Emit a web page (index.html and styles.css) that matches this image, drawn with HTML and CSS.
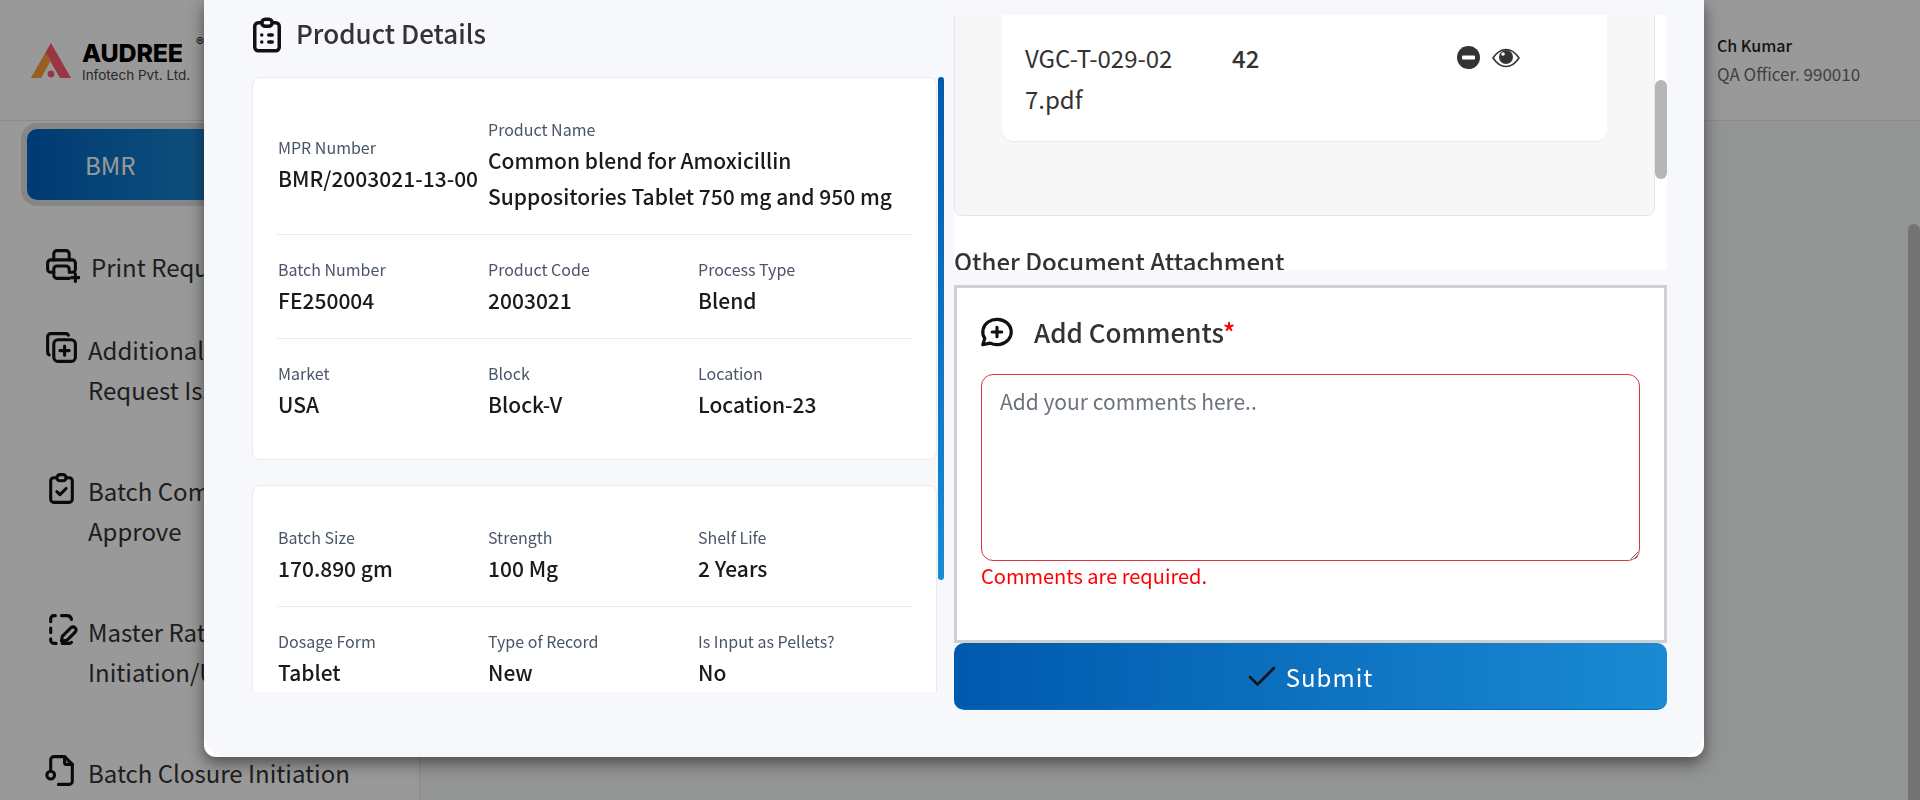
FILE: index.html
```html
<!DOCTYPE html>
<html lang="en">
<head>
<meta charset="utf-8">
<title>BMR</title>
<link rel="stylesheet" href="styles.css">
</head>
<body>
<div class="page">
  <header class="topbar">
    <div class="logo">
      <svg class="logo-mark" viewBox="0 0 40 35"><polygon points="20,0 0,35 10,35 23,9" fill="#ff9a33"/><polygon points="20,0 40,35 29,35 14.500,10" fill="#ff5a70" /><polygon points="20,0 0,35 10,35 20,17 14.500,10" fill="#ff9f3a"/><circle cx="20" cy="31" r="3.400" fill="#ff5a70"/></svg>
      <div class="logo-text">
        <div class="logo-name">AUDREE<span class="logo-reg">®</span></div>
        <div class="logo-sub">Infotech Pvt. Ltd.</div>
      </div>
    </div>
    <div class="user">
      <div class="user-name">Ch Kumar</div>
      <div class="user-role">QA Officer. 990010</div>
    </div>
  </header>
  <div class="below">
    <aside class="sidebar">
      <div class="side-btn">BMR</div>
      <div class="side-item side-print">
        <svg class="ic" viewBox="0 0 24 24"><path d="M17 17h2a2 2 0 0 0 2 -2v-4a2 2 0 0 0 -2 -2h-14a2 2 0 0 0 -2 2v4a2 2 0 0 0 2 2h2"/><path d="M17 9v-4a2 2 0 0 0 -2 -2h-6a2 2 0 0 0 -2 2v4"/><path d="M17 21h-8a2 2 0 0 1 -2 -2v-4a2 2 0 0 1 2 -2h6a2 2 0 0 1 2 2v1"/><path d="M21 18v5M18.500 20.500h5"/></svg>
        <span>Print Request</span>
      </div>
      <div class="side-item">
        <svg class="ic" viewBox="0 0 24 24"><path d="M7 9.667a2.667 2.667 0 0 1 2.667 -2.667h8.666a2.667 2.667 0 0 1 2.667 2.667v8.666a2.667 2.667 0 0 1 -2.667 2.667h-8.666a2.667 2.667 0 0 1 -2.667 -2.667z"/><path d="M4.012 16.737a2 2 0 0 1 -1.012 -1.737v-10c0 -1.100 .9 -2 2 -2h10c.75 0 1.158 .385 1.500 1"/><path d="M11 14h6M14 11v6"/></svg>
        <span>Additional Batch Record Request Issue</span>
      </div>
      <div class="side-item">
        <svg class="ic" viewBox="0 0 24 24"><path d="M9 5h-2a2 2 0 0 0 -2 2v12a2 2 0 0 0 2 2h10a2 2 0 0 0 2 -2v-12a2 2 0 0 0 -2 -2h-2"/><path d="M9 5a2 2 0 0 1 2 -2h2a2 2 0 0 1 2 2a2 2 0 0 1 -2 2h-2a2 2 0 0 1 -2 -2z"/><path d="M9 14l2 2l4 -4"/></svg>
        <span>Batch Compliance Review Approve</span>
      </div>
      <div class="side-item">
        <svg class="ic" viewBox="0 0 24 24"><path d="M8 3h-1a2 2 0 0 0 -2 2v2M12 3h2l1.500 0a3 3 0 0 1 3 2.500M5 11v3M5 18v1a2 2 0 0 0 2 2h1.500M12.500 21h4.500a2 2 0 0 0 1.500 -.7"/><path d="M12.500 16.500l5.500 -5.500a1.900 1.900 0 0 1 3 2.500l-5.500 5.500l-3.500 .5z"/></svg>
        <span>Master Rate Change Initiation/Update</span>
      </div>
      <div class="side-item">
        <svg class="ic" viewBox="0 0 24 24"><path d="M14 3v4a1 1 0 0 0 1 1h4"/><path d="M5 11v-6a2 2 0 0 1 2 -2h7l5 5v11a2 2 0 0 1 -2 2h-7"/><circle cx="5" cy="15" r="2.500"/></svg>
        <span>Batch Closure Initiation</span>
      </div>
    </aside>
    <main class="content"></main>
  </div>
  <div class="page-thumb"></div>
</div>

<div class="backdrop"></div>

<section class="modal">
  <div class="modal-body">
    <div class="col-left">
      <h2 class="section-title">
        <svg class="ic ic-title" viewBox="0 0 24 24"><path d="M9 5h-2a2 2 0 0 0 -2 2v12a2 2 0 0 0 2 2h10a2 2 0 0 0 2 -2v-12a2 2 0 0 0 -2 -2h-2"/><path d="M9 5a2 2 0 0 1 2 -2h2a2 2 0 0 1 2 2a2 2 0 0 1 -2 2h-2a2 2 0 0 1 -2 -2z"/><path d="M9 12h.01M13 12h2M9 16h.01M13 16h2"/></svg>
        <span>Product Details</span>
      </h2>
      <div class="left-scroll">
        <div class="card">
          <div class="info-row info-center">
            <div class="field"><div class="lbl">MPR Number</div><div class="val">BMR/2003021-13-00</div></div>
            <div class="field field-wide"><div class="lbl">Product Name</div><div class="val">Common blend for Amoxicillin Suppositories Tablet 750 mg and 950 mg</div></div>
          </div>
          <div class="info-row">
            <div class="field"><div class="lbl">Batch Number</div><div class="val">FE250004</div></div>
            <div class="field"><div class="lbl">Product Code</div><div class="val">2003021</div></div>
            <div class="field"><div class="lbl">Process Type</div><div class="val">Blend</div></div>
          </div>
          <div class="info-row">
            <div class="field"><div class="lbl">Market</div><div class="val">USA</div></div>
            <div class="field"><div class="lbl">Block</div><div class="val">Block-V</div></div>
            <div class="field"><div class="lbl">Location</div><div class="val">Location-23</div></div>
          </div>
        </div>
        <div class="card">
          <div class="info-row">
            <div class="field"><div class="lbl">Batch Size</div><div class="val">170.890 gm</div></div>
            <div class="field"><div class="lbl">Strength</div><div class="val">100 Mg</div></div>
            <div class="field"><div class="lbl">Shelf Life</div><div class="val">2 Years</div></div>
          </div>
          <div class="info-row">
            <div class="field"><div class="lbl">Dosage Form</div><div class="val">Tablet</div></div>
            <div class="field"><div class="lbl">Type of Record</div><div class="val">New</div></div>
            <div class="field"><div class="lbl">Is Input as Pellets?</div><div class="val">No</div></div>
          </div>
        </div>
        <div class="left-thumb"></div>
      </div>
    </div>

    <div class="col-right">
      <div class="right-scroll">
        <div class="file-panel">
          <div class="file-card">
            <div class="file-name">VGC-T-029-027.pdf</div>
            <div class="file-count">42</div>
            <div class="file-actions">
              <svg class="ic-minus" viewBox="0 0 23 23"><circle cx="11.500" cy="11.500" r="11.500" fill="#333"/><rect x="5" y="9.500" width="13" height="4" rx="1" fill="#fff"/></svg>
              <svg class="ic-eye" viewBox="0 0 28 20"><path d="M1 10C5 4 9 1.500 14 1.500S23 4 27 10C23 16 19 18.500 14 18.500S5 16 1 10Z" fill="none" stroke="#333" stroke-width="1.600"/><circle cx="14" cy="9" r="7" fill="#333"/><circle cx="11" cy="6" r="1.800" fill="#fff"/></svg>
            </div>
          </div>
        </div>
        <h3 class="other-title">Other Document Attachment</h3>
        <div class="right-thumb"></div>
      </div>
      <div class="comment-box">
        <div class="comment-head">
          <svg class="ic ic-msg" viewBox="0 0 24 24"><path d="M3 20l1.300 -3.900c-2.324 -3.437 -1.426 -7.872 2.100 -10.374c3.526 -2.501 8.590 -2.296 11.845 .48c3.255 2.777 3.695 7.266 1.029 10.501c-2.666 3.235 -7.615 4.215 -11.574 2.293l-4.700 1"/><path d="M9 12h6M12 9v6"/></svg>
          <span class="comment-title">Add Comments<span class="req">*</span></span>
        </div>
        <textarea class="comment-input" placeholder="Add your comments here.."></textarea>
        <div class="comment-error">Comments are required.</div>
      </div>
      <button class="submit" type="button">
        <svg class="ic-check" viewBox="0 0 28 21"><path d="M2 11l7.500 7.500L26 2"/></svg>
        <span>Submit</span>
      </button>
    </div>
  </div>
</section>
</body>
</html>
```
FILE: styles.css
```css
* { box-sizing: border-box; }
html, body { margin: 0; padding: 0; height: 100%; overflow: hidden; }
body { font-family: "Noto Sans CJK SC", "Noto Sans", sans-serif; color: #212529; background: #fff; }

.page { height: 800px; display: flex; flex-direction: column; background: #fff; }
.topbar { height: 121px; flex: none; display: flex; justify-content: space-between; background: #fff; border-bottom: 1px solid #e8e8e8; padding: 43px 0 0 31px; }
.logo { display: flex; gap: 11px; align-items: flex-start; }
.logo-mark { width: 40px; height: 35px; }
.logo-text { width: 125px; }
.logo-name { font-family: Inter, sans-serif; font-weight: 800; font-size: 25px; line-height: 20px; color: #000; position: relative; letter-spacing: -.2px; }
.logo-reg { position: absolute; left: 114px; top: -8px; font-size: 12px; font-weight: 400; line-height: 14px; }
.logo-sub { font-family: Inter, sans-serif; font-size: 13.500px; line-height: 16px; margin-top: 4px; color: #444; white-space: nowrap; }
.user { width: 203px; margin-top: -10px; }
.user-name { font-size: 16px; font-weight: 500; line-height: 24px; color: #212529; }
.user-role { font-size: 17px; line-height: 24px; margin-top: 5px; color: #6c6c6c; }

.below { flex: 1; display: flex; min-height: 0; }
.sidebar { width: 420px; flex: none; border-right: 1px solid #e4e4e4; padding: 8px 0 0 27px; overflow: hidden; }
.side-btn { width: 200px; height: 71px; margin-bottom: 47px; padding-left: 58px; border-radius: 10px; display: flex; align-items: center; background: linear-gradient(90deg, #0063c0, #1a8ad3); box-shadow: 0 0 0 6px #e0e0e0; color: #fff; font-size: 24px; }
.side-item { display: flex; align-items: flex-start; gap: 8px; margin-left: 16px; margin-bottom: 60px; width: 360px; font-size: 24px; line-height: 40px; color: #333; height: 81px; }
.side-item span { flex: 1; }
.side-print { height: 40px; margin-bottom: 43px; gap: 11px; }
.ic { fill: none; stroke: #111; stroke-width: 2; stroke-linecap: round; stroke-linejoin: round; width: 37px; height: 37px; flex: none; margin-top: -1px; }
.content { flex: 1; background: #f5f8f7; }
.page-thumb { position: absolute; right: 0; top: 224px; width: 12px; height: 576px; border-radius: 6px 6px 0 0; background: #bfc0bf; }

.backdrop { position: fixed; inset: 0; background: rgba(0, 0, 0, .4); }

.modal { position: absolute; left: 204px; top: 0; width: 1500px; height: 757px; background: #fff; border-radius: 0 0 12px 12px; box-shadow: 0 6px 16px rgba(0, 0, 0, .5); }
.modal-body { height: 100%; display: flex; gap: 10px; padding: 15px 37px 0 48px; background: #f7f8fb; border-radius: 0 0 24px 24px; }

.col-left { width: 692px; flex: none; display: flex; flex-direction: column; }
.section-title { margin: 0; height: 62px; flex: none; display: flex; align-items: flex-start; gap: 6px; font-size: 26px; font-weight: 500; line-height: 36px; color: #333; }
.ic-title { width: 42px; height: 42px; margin-left: -6px; }
.section-title span { margin-left: 2px; }
.left-scroll { position: relative; height: 615px; overflow: hidden; }
.card { width: 685px; background: #fff; border: 1px solid #e8ebef; border-radius: 8px; padding: 17px 24px; margin-bottom: 25px; }
.info-row { display: grid; grid-template-columns: 210px 210px 210px; padding: 23px 0 20px 1px; border-bottom: 1px solid #e9ebef; width: 636px; }
.card .info-row:last-child { border-bottom: 0; }
.info-center { align-items: center; }
.field-wide { grid-column: span 2; }
.lbl { font-size: 16px; line-height: 22px; color: #4a5568; margin-bottom: 2px; }
.val { font-size: 21px; font-weight: 500; line-height: 36px; color: #1a1a1a; }
.left-thumb { position: absolute; left: 686px; top: 0; width: 6px; height: 503px; border-radius: 3px; background: linear-gradient(180deg, #0059ad, #1a8ad3); }

.col-right { width: 713px; flex: none; display: flex; flex-direction: column; }
.right-scroll { position: relative; height: 255px; background: #fff; overflow: hidden; display: flex; flex-direction: column; justify-content: flex-end; flex: none; }
.file-panel { flex: none; width: 701px; background: #f7f7f8; border: 1px solid #e4e6ea; border-radius: 8px; padding: 0 47px 73px; margin-bottom: 27px; }
.file-card { background: #fff; border-bottom: 1px solid #e8eaee; border-radius: 0 0 12px 12px; height: 300px; padding: 0 0 22px 23px; display: grid; grid-template-columns: 207px 225px auto; align-content: end; }
.file-name { width: 150px; font-size: 24px; line-height: 41px; color: #333; word-break: break-all; }
.file-count { font-size: 24px; line-height: 41px; font-weight: 500; color: #333; }
.file-actions { display: flex; gap: 12px; align-items: flex-start; padding-top: 9px; }
.ic-minus { width: 23px; height: 23px; }
.ic-eye { width: 28px; height: 20px; margin-top: 2px; }
.other-title { flex: none; margin: 0; height: 27px; font-size: 24px; font-weight: 500; line-height: 36px; color: #333; overflow: visible; }
.right-thumb { position: absolute; right: 0; top: 65px; width: 12px; height: 99px; border-radius: 6px; background: #b5b7b6; }

.comment-box { margin-top: 15px; height: 358px; border: 3px solid #d0d0d0; background: #fff; padding: 28px 21px 0 24px; flex: none; }
.comment-head { display: flex; gap: 18px; align-items: center; height: 32px; margin-bottom: 26px; }
.ic-msg { width: 38px; height: 38px; margin: 0 -3px; }
.comment-title { font-size: 26px; font-weight: 500; color: #333; line-height: 32px; margin-left: 3px; }
.req { color: #f00; }
.comment-input { display: block; width: 659px; height: 187px; border: 1px solid #dc3545; border-radius: 12px; padding: 8px 18px; font: 21px/36px "Noto Sans CJK SC", "Noto Sans", sans-serif; outline: 0; resize: vertical; }
.comment-input::placeholder { color: #6c757d; opacity: 1; }
.comment-error { color: #f00; font-size: 20px; line-height: 30px; }
.submit { flex: none; height: 67px; border: 0; border-bottom: 1px solid #0b6cb5; border-radius: 10px; background: linear-gradient(90deg, #0059ad, #1a8ad3); display: flex; justify-content: center; align-items: center; gap: 10px; color: #fff; font: 24px "Noto Sans CJK SC", "Noto Sans", sans-serif; letter-spacing: 1px; padding: 0; }
.ic-check { width: 28px; height: 21px; fill: none; stroke: #111; stroke-width: 2.500; stroke-linecap: round; stroke-linejoin: round; }
```
